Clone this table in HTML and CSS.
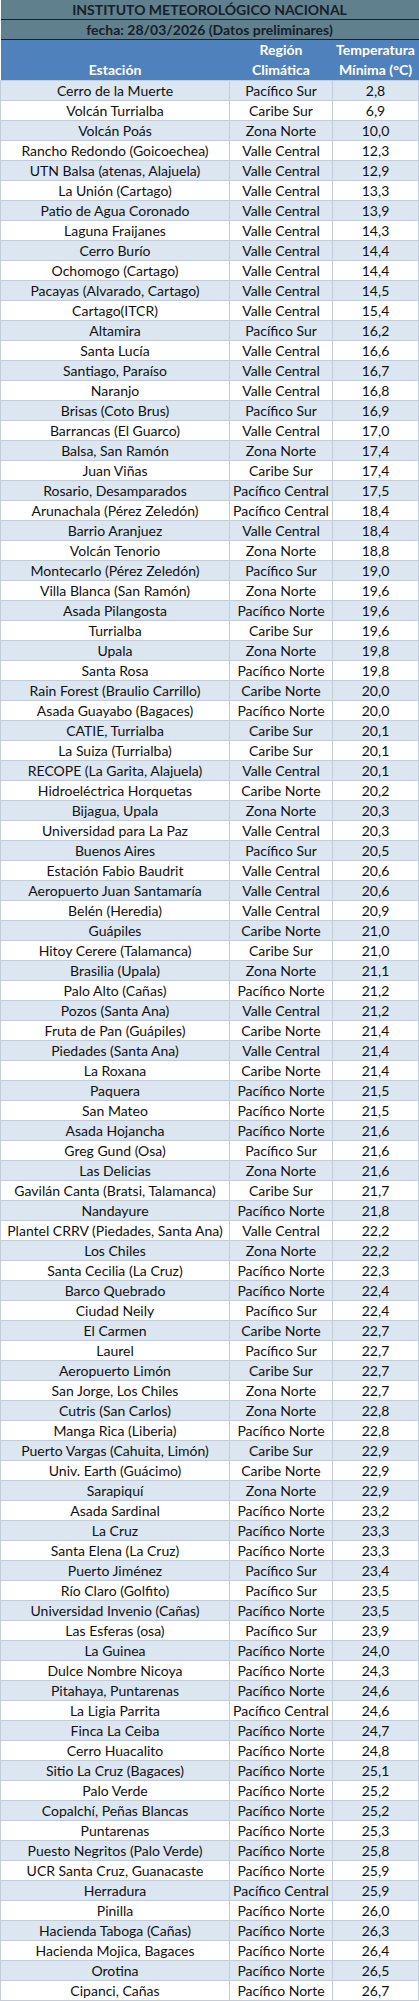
FILE: index.html
```html
<!DOCTYPE html>
<html lang="es">
<head>
<meta charset="utf-8">
<title>Temperatura mínima</title>
<link rel="stylesheet" href="styles.css">
</head>
<body>
<table class="report">
<colgroup><col class="c-st"><col class="c-rg"><col class="c-tp"></colgroup>
<thead>
<tr class="title"><th colspan="3">INSTITUTO METEOROLÓGICO NACIONAL</th></tr>
<tr class="title"><th colspan="3">fecha: 28/03/2026 (Datos preliminares)</th></tr>
<tr class="head"><th>Estación</th><th>Región<br>Climática</th><th>Temperatura<br>Mínima (°C)</th></tr>
</thead>
<tbody>
<tr><td>Cerro de la Muerte</td><td>Pacífico Sur</td><td>2,8</td></tr>
<tr><td>Volcán Turrialba</td><td>Caribe Sur</td><td>6,9</td></tr>
<tr><td>Volcán Poás</td><td>Zona Norte</td><td>10,0</td></tr>
<tr><td>Rancho Redondo (Goicoechea)</td><td>Valle Central</td><td>12,3</td></tr>
<tr><td>UTN Balsa (atenas, Alajuela)</td><td>Valle Central</td><td>12,9</td></tr>
<tr><td>La Unión (Cartago)</td><td>Valle Central</td><td>13,3</td></tr>
<tr><td>Patio de Agua Coronado</td><td>Valle Central</td><td>13,9</td></tr>
<tr><td>Laguna Fraijanes</td><td>Valle Central</td><td>14,3</td></tr>
<tr><td>Cerro Burío</td><td>Valle Central</td><td>14,4</td></tr>
<tr><td>Ochomogo (Cartago)</td><td>Valle Central</td><td>14,4</td></tr>
<tr><td>Pacayas (Alvarado, Cartago)</td><td>Valle Central</td><td>14,5</td></tr>
<tr><td>Cartago(ITCR)</td><td>Valle Central</td><td>15,4</td></tr>
<tr><td>Altamira</td><td>Pacífico Sur</td><td>16,2</td></tr>
<tr><td>Santa Lucía</td><td>Valle Central</td><td>16,6</td></tr>
<tr><td>Santiago, Paraíso</td><td>Valle Central</td><td>16,7</td></tr>
<tr><td>Naranjo</td><td>Valle Central</td><td>16,8</td></tr>
<tr><td>Brisas (Coto Brus)</td><td>Pacífico Sur</td><td>16,9</td></tr>
<tr><td>Barrancas (El Guarco)</td><td>Valle Central</td><td>17,0</td></tr>
<tr><td>Balsa, San Ramón</td><td>Zona Norte</td><td>17,4</td></tr>
<tr><td>Juan Viñas</td><td>Caribe Sur</td><td>17,4</td></tr>
<tr><td>Rosario, Desamparados</td><td>Pacífico Central</td><td>17,5</td></tr>
<tr><td>Arunachala (Pérez Zeledón)</td><td>Pacífico Central</td><td>18,4</td></tr>
<tr><td>Barrio Aranjuez</td><td>Valle Central</td><td>18,4</td></tr>
<tr><td>Volcán Tenorio</td><td>Zona Norte</td><td>18,8</td></tr>
<tr><td>Montecarlo (Pérez Zeledón)</td><td>Pacífico Sur</td><td>19,0</td></tr>
<tr><td>Villa Blanca (San Ramón)</td><td>Zona Norte</td><td>19,6</td></tr>
<tr><td>Asada Pilangosta</td><td>Pacífico Norte</td><td>19,6</td></tr>
<tr><td>Turrialba</td><td>Caribe Sur</td><td>19,6</td></tr>
<tr><td>Upala</td><td>Zona Norte</td><td>19,8</td></tr>
<tr><td>Santa Rosa</td><td>Pacífico Norte</td><td>19,8</td></tr>
<tr><td>Rain Forest (Braulio Carrillo)</td><td>Caribe Norte</td><td>20,0</td></tr>
<tr><td>Asada Guayabo (Bagaces)</td><td>Pacífico Norte</td><td>20,0</td></tr>
<tr><td>CATIE, Turrialba</td><td>Caribe Sur</td><td>20,1</td></tr>
<tr><td>La Suiza (Turrialba)</td><td>Caribe Sur</td><td>20,1</td></tr>
<tr><td>RECOPE (La Garita, Alajuela)</td><td>Valle Central</td><td>20,1</td></tr>
<tr><td>Hidroeléctrica Horquetas</td><td>Caribe Norte</td><td>20,2</td></tr>
<tr><td>Bijagua, Upala</td><td>Zona Norte</td><td>20,3</td></tr>
<tr><td>Universidad para La Paz</td><td>Valle Central</td><td>20,3</td></tr>
<tr><td>Buenos Aires</td><td>Pacífico Sur</td><td>20,5</td></tr>
<tr><td>Estación Fabio Baudrit</td><td>Valle Central</td><td>20,6</td></tr>
<tr><td>Aeropuerto Juan Santamaría</td><td>Valle Central</td><td>20,6</td></tr>
<tr><td>Belén (Heredia)</td><td>Valle Central</td><td>20,9</td></tr>
<tr><td>Guápiles</td><td>Caribe Norte</td><td>21,0</td></tr>
<tr><td>Hitoy Cerere (Talamanca)</td><td>Caribe Sur</td><td>21,0</td></tr>
<tr><td>Brasilia (Upala)</td><td>Zona Norte</td><td>21,1</td></tr>
<tr><td>Palo Alto (Cañas)</td><td>Pacífico Norte</td><td>21,2</td></tr>
<tr><td>Pozos (Santa Ana)</td><td>Valle Central</td><td>21,2</td></tr>
<tr><td>Fruta de Pan (Guápiles)</td><td>Caribe Norte</td><td>21,4</td></tr>
<tr><td>Piedades (Santa Ana)</td><td>Valle Central</td><td>21,4</td></tr>
<tr><td>La Roxana</td><td>Caribe Norte</td><td>21,4</td></tr>
<tr><td>Paquera</td><td>Pacífico Norte</td><td>21,5</td></tr>
<tr><td>San Mateo</td><td>Pacífico Norte</td><td>21,5</td></tr>
<tr><td>Asada Hojancha</td><td>Pacífico Norte</td><td>21,6</td></tr>
<tr><td>Greg Gund (Osa)</td><td>Pacífico Sur</td><td>21,6</td></tr>
<tr><td>Las Delicias</td><td>Zona Norte</td><td>21,6</td></tr>
<tr><td>Gavilán Canta (Bratsi, Talamanca)</td><td>Caribe Sur</td><td>21,7</td></tr>
<tr><td>Nandayure</td><td>Pacífico Norte</td><td>21,8</td></tr>
<tr><td>Plantel CRRV (Piedades, Santa Ana)</td><td>Valle Central</td><td>22,2</td></tr>
<tr><td>Los Chiles</td><td>Zona Norte</td><td>22,2</td></tr>
<tr><td>Santa Cecilia (La Cruz)</td><td>Pacífico Norte</td><td>22,3</td></tr>
<tr><td>Barco Quebrado</td><td>Pacífico Norte</td><td>22,4</td></tr>
<tr><td>Ciudad Neily</td><td>Pacífico Sur</td><td>22,4</td></tr>
<tr><td>El Carmen</td><td>Caribe Norte</td><td>22,7</td></tr>
<tr><td>Laurel</td><td>Pacífico Sur</td><td>22,7</td></tr>
<tr><td>Aeropuerto Limón</td><td>Caribe Sur</td><td>22,7</td></tr>
<tr><td>San Jorge, Los Chiles</td><td>Zona Norte</td><td>22,7</td></tr>
<tr><td>Cutris (San Carlos)</td><td>Zona Norte</td><td>22,8</td></tr>
<tr><td>Manga Rica (Liberia)</td><td>Pacífico Norte</td><td>22,8</td></tr>
<tr><td>Puerto Vargas (Cahuita, Limón)</td><td>Caribe Sur</td><td>22,9</td></tr>
<tr><td>Univ. Earth (Guácimo)</td><td>Caribe Norte</td><td>22,9</td></tr>
<tr><td>Sarapiquí</td><td>Zona Norte</td><td>22,9</td></tr>
<tr><td>Asada Sardinal</td><td>Pacífico Norte</td><td>23,2</td></tr>
<tr><td>La Cruz</td><td>Pacífico Norte</td><td>23,3</td></tr>
<tr><td>Santa Elena (La Cruz)</td><td>Pacífico Norte</td><td>23,3</td></tr>
<tr><td>Puerto Jiménez</td><td>Pacífico Sur</td><td>23,4</td></tr>
<tr><td>Río Claro (Golfito)</td><td>Pacífico Sur</td><td>23,5</td></tr>
<tr><td>Universidad Invenio (Cañas)</td><td>Pacífico Norte</td><td>23,5</td></tr>
<tr><td>Las Esferas (osa)</td><td>Pacífico Sur</td><td>23,9</td></tr>
<tr><td>La Guinea</td><td>Pacífico Norte</td><td>24,0</td></tr>
<tr><td>Dulce Nombre Nicoya</td><td>Pacífico Norte</td><td>24,3</td></tr>
<tr><td>Pitahaya, Puntarenas</td><td>Pacífico Norte</td><td>24,6</td></tr>
<tr><td>La Ligia Parrita</td><td>Pacífico Central</td><td>24,6</td></tr>
<tr><td>Finca La Ceiba</td><td>Pacífico Norte</td><td>24,7</td></tr>
<tr><td>Cerro Huacalito</td><td>Pacífico Norte</td><td>24,8</td></tr>
<tr><td>Sitio La Cruz (Bagaces)</td><td>Pacífico Norte</td><td>25,1</td></tr>
<tr><td>Palo Verde</td><td>Pacífico Norte</td><td>25,2</td></tr>
<tr><td>Copalchí, Peñas Blancas</td><td>Pacífico Norte</td><td>25,2</td></tr>
<tr><td>Puntarenas</td><td>Pacífico Norte</td><td>25,3</td></tr>
<tr><td>Puesto Negritos (Palo Verde)</td><td>Pacífico Norte</td><td>25,8</td></tr>
<tr><td>UCR Santa Cruz, Guanacaste</td><td>Pacífico Norte</td><td>25,9</td></tr>
<tr><td>Herradura</td><td>Pacífico Central</td><td>25,9</td></tr>
<tr><td>Pinilla</td><td>Pacífico Norte</td><td>26,0</td></tr>
<tr><td>Hacienda Taboga (Cañas)</td><td>Pacífico Norte</td><td>26,3</td></tr>
<tr><td>Hacienda Mojica, Bagaces</td><td>Pacífico Norte</td><td>26,4</td></tr>
<tr><td>Orotina</td><td>Pacífico Norte</td><td>26,5</td></tr>
<tr><td>Cipanci, Cañas</td><td>Pacífico Norte</td><td>26,7</td></tr>
</tbody>
</table>
</body>
</html>
```

FILE: styles.css
```css
html, body {
  margin: 0;
  padding: 0;
  background: #ffffff;
}

.report {
  width: 418px;
  border-collapse: collapse;
  table-layout: fixed;
  font-family: Lato, "Open Sans", "Liberation Sans", sans-serif;
  font-size: 14px;
  color: #111111;
}

.c-st { width: 229px; }
.c-rg { width: 103px; }
.c-tp { width: 86px; }

.report th,
.report td {
  padding: 0;
  text-align: center;
  white-space: nowrap;
  overflow: hidden;
}

.title th {
  height: 19px;
  line-height: 19px;
  background: #61808d;
  color: #14202b;
  font-weight: 700;
  border-bottom: 1px solid #15222e;
}

.head th {
  height: 40px;
  line-height: 20px;
  vertical-align: bottom;
  background: #4f81bd;
  color: #ffffff;
  font-weight: 700;
}

.report tbody td {
  height: 19px;
  line-height: 19px;
  border: 1px solid #c3cdd9;
}

.report tbody tr:nth-child(odd) td {
  background: #dce6f1;
}

.report tbody tr:nth-child(even) td {
  background: #ffffff;
}
```
